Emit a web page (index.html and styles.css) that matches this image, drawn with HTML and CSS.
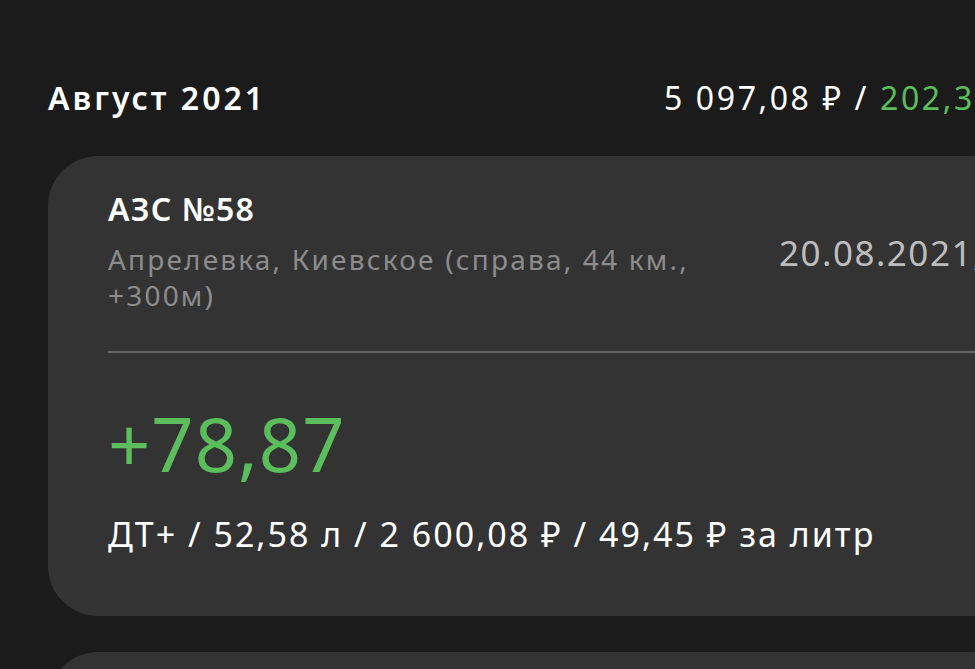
FILE: index.html
```html
<!DOCTYPE html>
<html lang="ru">
<head>
<meta charset="utf-8">
<title>Август 2021</title>
<link rel="stylesheet" href="styles.css">
</head>
<body>
<main class="page">
  <header class="month">
    <h1 class="month-title">Август 2021</h1>
    <div class="month-total">5 097,08 ₽ / <span class="green">202,35</span></div>
  </header>
  <section class="card">
    <div class="card-top">
      <div class="station">
        <div class="station-name">АЗС №58</div>
        <div class="station-addr">Апрелевка, Киевское (справа, 44 км., +300м)</div>
      </div>
      <div class="date">20.08.2021,</div>
    </div>
    <div class="divider"></div>
    <div class="bonus">+78,87</div>
    <div class="details">ДТ+ / 52,58 л / 2 600,08 ₽ / 49,45 ₽ за литр</div>
  </section>
  <section class="card card-next"></section>
</main>
</body>
</html>
```
FILE: styles.css
```css
html, body {
  margin: 0;
  padding: 0;
  width: 975px;
  height: 669px;
  overflow: hidden;
  background: #1b1b1b;
}
body {
  font-family: "Noto Sans", "DejaVu Sans", sans-serif;
  color: #ffffff;
}
.page {
  width: 1160px;
  padding: 78px 0 0 48px;
}
.month {
  display: flex;
  align-items: center;
  height: 40px;
}
.month-title {
  margin: 0;
  font-size: 32px;
  line-height: 40px;
  font-weight: 600;
  letter-spacing: 3px;
  width: 616px;
  flex: none;
}
.month-total {
  font-size: 32px;
  line-height: 40px;
  letter-spacing: 2.6px;
  white-space: nowrap;
}
.green { color: #5cbd5c; }
.card {
  margin-top: 38px;
  background: #333333;
  border-radius: 50px;
  padding: 33px 60px 60px 60px;
}
.card-top {
  display: flex;
  align-items: flex-start;
}
.station {
  width: 600px;
  flex: none;
}
.station-name {
  font-size: 32px;
  line-height: 40px;
  font-weight: 600;
  letter-spacing: 1.2px;
}
.station-addr {
  margin-top: 12px;
  font-size: 28px;
  line-height: 36px;
  letter-spacing: 2.2px;
  color: #8c8c8c;
}
.date {
  margin-left: 71px;
  margin-top: 42px;
  font-size: 35px;
  line-height: 44px;
  letter-spacing: 1.5px;
  color: #bdbdbd;
  white-space: nowrap;
}
.divider {
  margin-top: 38px;
  height: 2px;
  background: #676767;
}
.bonus {
  margin-top: 51px;
  font-size: 74px;
  line-height: 80px;
  letter-spacing: 1px;
  color: #5cbd5c;
}
.details {
  margin-top: 28px;
  font-size: 34px;
  line-height: 44px;
  letter-spacing: 2px;
  white-space: nowrap;
}
.card-next {
  margin-top: 36px;
  height: 200px;
  padding: 0;
}
```
